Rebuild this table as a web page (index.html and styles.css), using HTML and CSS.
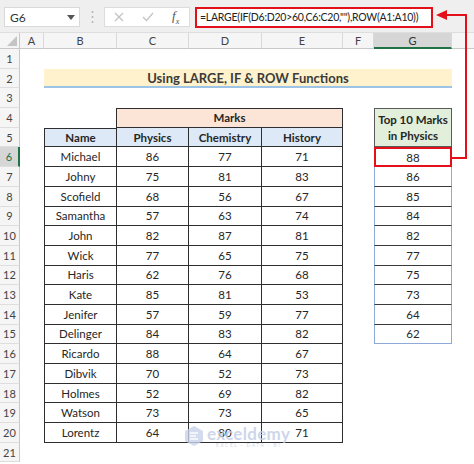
FILE: index.html
```html
<!DOCTYPE html>
<html>
<head>
<meta charset="utf-8">
<link rel="stylesheet" href="styles.css">
</head>
<body>
<div class="toolbar">
  <div class="namebox"><span>G6</span><svg class="caret" width="8" height="5" viewBox="0 0 8 5"><path d="M0 0H8L4 5Z" fill="#555"/></svg></div>
  <div class="sep"><svg width="3" height="14" viewBox="0 0 3 14"><circle cx="1.5" cy="2" r="1" fill="#b5b5b5"/><circle cx="1.5" cy="7" r="1" fill="#b5b5b5"/><circle cx="1.5" cy="12" r="1" fill="#b5b5b5"/></svg></div>
  <div class="fxbtns">
    <svg class="btn" width="10" height="10" viewBox="0 0 10 10"><path d="M1 1L9 9M9 1L1 9" stroke="#c2c2c2" stroke-width="1.2"/></svg>
    <svg class="btn" width="12" height="10" viewBox="0 0 12 10"><path d="M1 5L4.5 8.5L11 1" stroke="#c2c2c2" stroke-width="1.2" fill="none"/></svg>
    <span class="fx">f<sub>x</sub></span>
  </div>
  <div class="formula">=LARGE(IF(D6:D20&gt;60,C6:C20,""),ROW(A1:A10))</div>
</div>

<div class="sheet">
  <div class="corner"><svg width="10" height="10" viewBox="0 0 10 10"><path d="M10 0V10H0Z" fill="#c4c4c4"/></svg></div>
  <div class="ch">A</div><div class="ch">B</div><div class="ch">C</div><div class="ch">D</div><div class="ch">E</div><div class="ch">F</div><div class="ch sel">G</div><div class="ch last"></div>

  <div class="rh">1</div><div></div><div></div><div></div><div></div><div></div><div></div><div></div><div></div>
  <div class="rh">2</div><div></div><div class="title">Using LARGE, IF &amp; ROW Functions</div><div></div>
  <div class="rh">3</div><div></div><div></div><div></div><div></div><div></div><div></div><div></div><div></div>
  <div class="rh">4</div><div></div><div class="b4"></div><div class="marks">Marks</div><div></div><div class="top10">Top 10 Marks<br>in Physics</div><div></div>
  <div class="rh">5</div><div></div><div class="hd first">Name</div><div class="hd">Physics</div><div class="hd">Chemistry</div><div class="hd">History</div><div></div><div></div>

  <div class="rh sel">6</div><div></div><div class="td first">Michael</div><div class="td">86</div><div class="td">77</div><div class="td">71</div><div></div><div class="g red">88</div><div></div>
  <div class="rh">7</div><div></div><div class="td first">Johny</div><div class="td">75</div><div class="td">81</div><div class="td">83</div><div></div><div class="g">86</div><div></div>
  <div class="rh">8</div><div></div><div class="td first">Scofield</div><div class="td">68</div><div class="td">56</div><div class="td">67</div><div></div><div class="g">85</div><div></div>
  <div class="rh">9</div><div></div><div class="td first">Samantha</div><div class="td">57</div><div class="td">63</div><div class="td">74</div><div></div><div class="g">84</div><div></div>
  <div class="rh">10</div><div></div><div class="td first">John</div><div class="td">82</div><div class="td">87</div><div class="td">81</div><div></div><div class="g">82</div><div></div>
  <div class="rh">11</div><div></div><div class="td first">Wick</div><div class="td">77</div><div class="td">65</div><div class="td">75</div><div></div><div class="g">77</div><div></div>
  <div class="rh">12</div><div></div><div class="td first">Haris</div><div class="td">62</div><div class="td">76</div><div class="td">68</div><div></div><div class="g">75</div><div></div>
  <div class="rh">13</div><div></div><div class="td first">Kate</div><div class="td">85</div><div class="td">81</div><div class="td">53</div><div></div><div class="g">73</div><div></div>
  <div class="rh">14</div><div></div><div class="td first">Jenifer</div><div class="td">57</div><div class="td">59</div><div class="td">77</div><div></div><div class="g">64</div><div></div>
  <div class="rh">15</div><div></div><div class="td first">Delinger</div><div class="td">84</div><div class="td">83</div><div class="td">82</div><div></div><div class="g end">62</div><div></div>
  <div class="rh">16</div><div></div><div class="td first">Ricardo</div><div class="td">88</div><div class="td">64</div><div class="td">67</div><div></div><div></div><div></div>
  <div class="rh">17</div><div></div><div class="td first">Dibvik</div><div class="td">70</div><div class="td">52</div><div class="td">73</div><div></div><div></div><div></div>
  <div class="rh">18</div><div></div><div class="td first">Holmes</div><div class="td">52</div><div class="td">69</div><div class="td">82</div><div></div><div></div><div></div>
  <div class="rh">19</div><div></div><div class="td first">Watson</div><div class="td">73</div><div class="td">73</div><div class="td">65</div><div></div><div></div><div></div>
  <div class="rh">20</div><div></div><div class="td first">Lorentz</div><div class="td">64</div><div class="td">80</div><div class="td">71</div><div></div><div></div><div></div>
  <div class="rh">21</div><div></div><div></div><div></div><div></div><div></div><div></div><div></div><div></div>
</div>

<div class="watermark">
  <svg width="22" height="22" viewBox="0 0 22 22"><path d="M11 1L20 6V16L11 21L2 16V6Z" fill="#c9d3ea"/><path d="M7 8H15M7 11H13M7 14H15" stroke="#eef2fa" stroke-width="2"/></svg>
  <div class="wm-text"><span class="wm-name">exceldemy</span><span class="wm-sub">EXCEL · DATA · BI</span></div>
</div>

<svg class="arrow" width="474" height="464" viewBox="0 0 474 464">
  <path d="M452 158H466V15H444" fill="none" stroke="#e3101a" stroke-width="2"/>
  <path d="M436 15L447 10V20Z" fill="#e3101a"/>
</svg>
</body>
</html>
```

FILE: styles.css
```css
* {
  box-sizing: border-box;
  margin: 0;
  padding: 0;
}

body {
  width: 474px;
  height: 464px;
  overflow: hidden;
  position: relative;
  background: #fff;
  font-family: Lato, "Liberation Sans", sans-serif;
  color: #262626;
}

.toolbar {
  height: 33px;
  background: #efefef;
  display: flex;
  align-items: flex-start;
  padding: 7px 0 0 4px;
  border-bottom: 1px solid #dedede;
}

.namebox {
  width: 76px;
  height: 20px;
  background: #fff;
  border: 1px solid #d9d9d9;
  display: flex;
  align-items: center;
  justify-content: space-between;
  padding: 0 4px 0 5px;
  font-size: 12px;
  color: #333;
}

.sep {
  width: 24px;
  height: 20px;
  display: flex;
  align-items: center;
  justify-content: center;
}

.fxbtns {
  width: 86px;
  height: 20px;
  background: #fff;
  border: 1px solid #dcdcdc;
  display: flex;
  align-items: center;
  padding-left: 9px;
  gap: 18px;
}

.fx {
  font-family: "Liberation Serif", serif;
  font-style: italic;
  font-size: 13px;
  color: #555;
  margin-left: 0;
}

.fx sub {
  font-size: 8px;
}

.formula {
  margin-left: 5px;
  width: 238px;
  height: 21px;
  background: #fff;
  border: 2px solid #e3101a;
  font-size: 10.5px;
  letter-spacing: -0.25px;
  line-height: 17px;
  padding-left: 3px;
  color: #222;
  white-space: nowrap;
  overflow: hidden;
}

.sheet {
  display: grid;
  grid-template-columns: 20px 24px 73px 72px 73px 81px 31px 78px 22px;
  grid-template-rows: 16px repeat(21, 19.7px);
  font-size: 11.5px;
}

.sheet > div {
  display: flex;
  align-items: center;
  justify-content: center;
  min-width: 0;
}

.corner {
  background: #f5f5f5;
  border-right: 1px solid #c8c8c8;
  border-bottom: 1px solid #c8c8c8;
  align-items: flex-end !important;
  justify-content: flex-end !important;
  padding: 0 2px 2px 0;
}

.ch {
  background: #f5f5f5;
  border-right: 1px solid #d9d9d9;
  border-bottom: 1px solid #c8c8c8;
  font-size: 11px;
  color: #444;
}

.ch.sel {
  background: #d6d6d6;
  border-bottom: 2px solid #217346;
  color: #333;
}

.ch.last {
  border-right: none;
}

.rh {
  background: #f5f5f5;
  border-right: 1px solid #c8c8c8;
  border-bottom: 1px solid #dedede;
  font-size: 11px;
  color: #444;
}

.rh.sel {
  background: #d6d6d6;
  border-right: 2px solid #217346;
  color: #217346;
}

.title {
  grid-column: span 6;
  background: #fff2cc;
  border-bottom: 2px solid #9dc3e6;
  font-weight: 700;
  font-size: 13px;
  color: #3b3b3b;
}

.b4 {
  border-right: 1px solid #2e2e2e;
}

.marks {
  grid-column: span 3;
  background: #fce4d6;
  border-top: 1px solid #2e2e2e;
  border-right: 1px solid #2e2e2e;
  border-bottom: 1px solid #2e2e2e;
  font-weight: 700;
}

.top10 {
  grid-row: span 2;
  background: #e2efda;
  border: 1px solid #5a5a5a;
  font-weight: 700;
  text-align: center;
  line-height: 16px;
}

.hd {
  background: #dde9f6;
  border-right: 1px solid #2e2e2e;
  border-bottom: 1px solid #2e2e2e;
  font-weight: 700;
}

.hd.first {
  border-top: 1px solid #2e2e2e;
  border-left: 1px solid #2e2e2e;
}

.td {
  border-right: 1px solid #2e2e2e;
  border-bottom: 1px solid #2e2e2e;
}

.td.first {
  border-left: 1px solid #2e2e2e;
}

.g {
  border-left: 1px solid #8eaadb;
  border-right: 1px solid #8eaadb;
  border-bottom: 1px solid #3a3a3a;
}

.g.end {
  border-bottom: 1px solid #8eaadb;
}

.g.red {
  border: 2px solid #e3101a;
}

.watermark {
  position: absolute;
  left: 183px;
  top: 425px;
  display: flex;
  align-items: flex-start;
  gap: 2px;
  opacity: 0.8;
}

.wm-text {
  display: flex;
  flex-direction: column;
  align-items: center;
  line-height: 1;
}

.wm-name {
  font-size: 17px;
  font-weight: 700;
  color: #c3cde6;
  letter-spacing: 0.3px;
}

.wm-sub {
  font-size: 5px;
  color: #c8cfdf;
  letter-spacing: 1.5px;
  margin-top: 1px;
}

.arrow {
  position: absolute;
  left: 0;
  top: 0;
  pointer-events: none;
}
```
